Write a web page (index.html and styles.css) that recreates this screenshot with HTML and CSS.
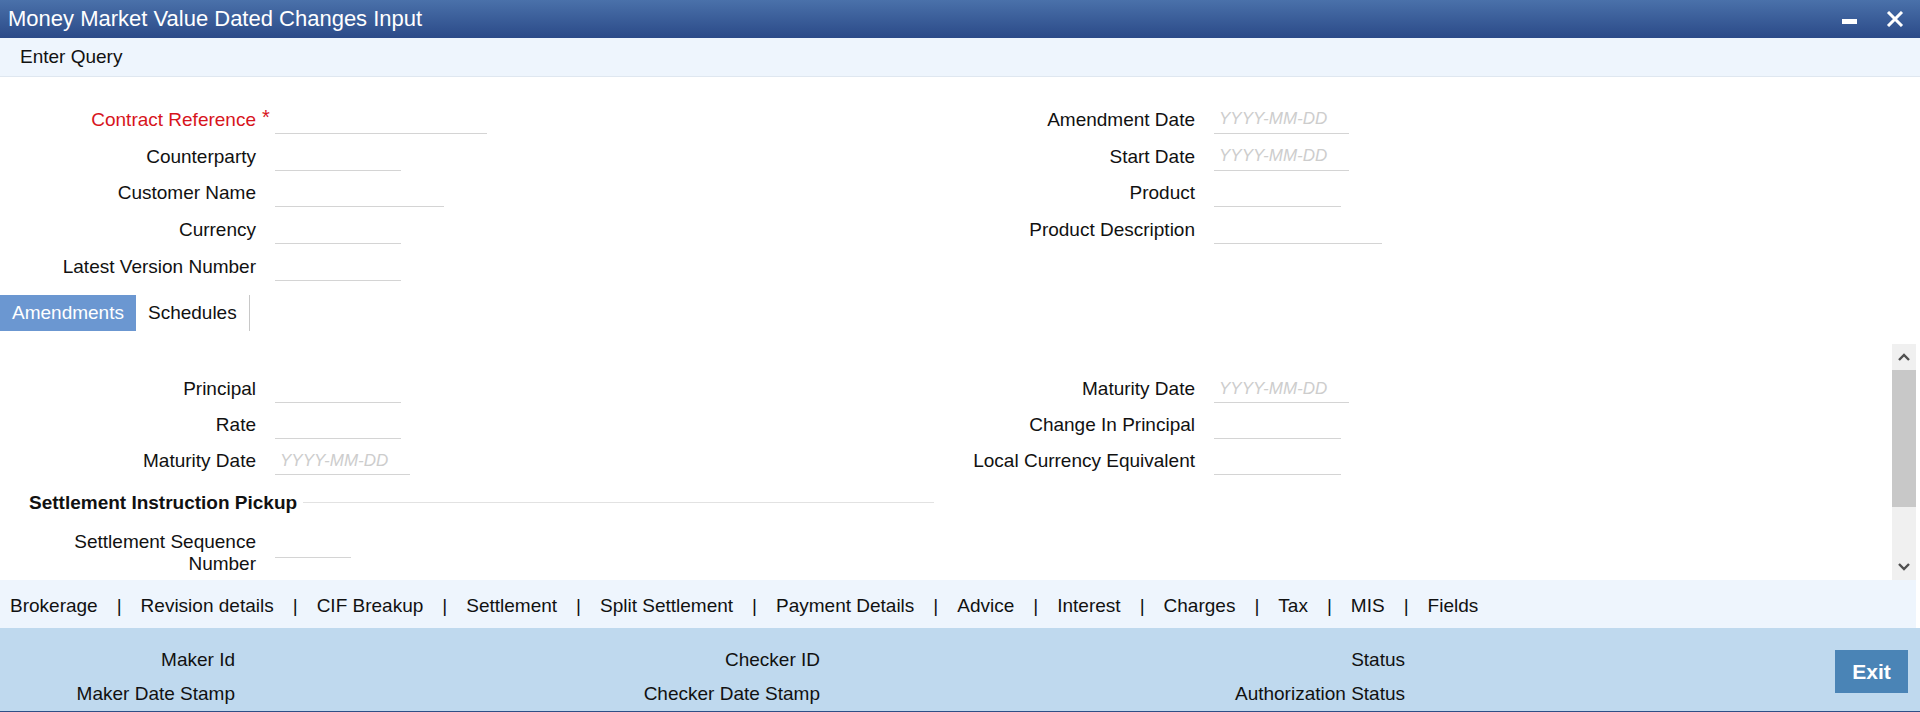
FILE: index.html
```html
<!DOCTYPE html>
<html lang="en">
<head>
    <meta charset="UTF-8">
    <title>Money Market Value Dated Changes Input</title>
    <link rel="stylesheet" href="styles.css">
</head>
<body>
    <div class="window">
        <div class="titlebar">
            <span class="title">Money Market Value Dated Changes Input</span>
            <div class="win-btns">
                <span class="btn-min"></span>
                <svg class="btn-close" width="18" height="16" viewBox="0 0 18 16">
                    <path d="M2 1 L16 15 M16 1 L2 15" stroke="#fff" stroke-width="3" fill="none"/>
                </svg>
            </div>
        </div>

        <div class="toolbar">Enter Query</div>

        <div class="header-form">
            <div class="col">
                <div class="row">
                    <label class="lbl req">Contract Reference<span class="star">*</span></label>
                    <input class="fld w212" type="text">
                </div>
                <div class="row">
                    <label class="lbl">Counterparty</label>
                    <input class="fld w126" type="text">
                </div>
                <div class="row">
                    <label class="lbl">Customer Name</label>
                    <input class="fld w169" type="text">
                </div>
                <div class="row">
                    <label class="lbl">Currency</label>
                    <input class="fld w126" type="text">
                </div>
                <div class="row">
                    <label class="lbl">Latest Version Number</label>
                    <input class="fld w126" type="text">
                </div>
            </div>
            <div class="col">
                <div class="row">
                    <label class="lbl">Amendment Date</label>
                    <input class="fld w135" type="text" placeholder="YYYY-MM-DD">
                </div>
                <div class="row">
                    <label class="lbl">Start Date</label>
                    <input class="fld w135" type="text" placeholder="YYYY-MM-DD">
                </div>
                <div class="row">
                    <label class="lbl">Product</label>
                    <input class="fld w127" type="text">
                </div>
                <div class="row">
                    <label class="lbl">Product Description</label>
                    <input class="fld w168" type="text">
                </div>
            </div>
        </div>

        <div class="tabs">
            <div class="tab active">Amendments</div>
            <div class="tab">Schedules</div>
        </div>

        <div class="scroll-area">
            <div class="scroll-content">
                <div class="grid2">
                    <div class="col">
                        <div class="row r36">
                            <label class="lbl">Principal</label>
                            <input class="fld w126" type="text">
                        </div>
                        <div class="row r36">
                            <label class="lbl">Rate</label>
                            <input class="fld w126" type="text">
                        </div>
                        <div class="row r36">
                            <label class="lbl">Maturity Date</label>
                            <input class="fld w135" type="text" placeholder="YYYY-MM-DD">
                        </div>
                    </div>
                    <div class="col">
                        <div class="row r36">
                            <label class="lbl">Maturity Date</label>
                            <input class="fld w135" type="text" placeholder="YYYY-MM-DD">
                        </div>
                        <div class="row r36">
                            <label class="lbl">Change In Principal</label>
                            <input class="fld w127" type="text">
                        </div>
                        <div class="row r36">
                            <label class="lbl">Local Currency Equivalent</label>
                            <input class="fld w127" type="text">
                        </div>
                    </div>
                </div>

                <div class="section-head">
                    <span>Settlement Instruction Pickup</span>
                    <div class="section-line"></div>
                </div>

                <div class="row seq-row">
                    <label class="lbl two-line">Settlement Sequence<br>Number</label>
                    <input class="fld w76 seq-fld" type="text">
                </div>
            </div>

            <div class="scrollbar">
                <div class="sb-arrow">
                    <svg width="12" height="8" viewBox="0 0 12 8"><polyline points="1,7 6,2 11,7" stroke="#505050" stroke-width="2.4" fill="none"/></svg>
                </div>
                <div class="sb-track">
                    <div class="sb-thumb"></div>
                </div>
                <div class="sb-arrow">
                    <svg width="12" height="8" viewBox="0 0 12 8"><polyline points="1,1 6,6 11,1" stroke="#505050" stroke-width="2.4" fill="none"/></svg>
                </div>
            </div>
        </div>

        <div class="subtabs">
            <span>Brokerage</span><span class="sep">|</span>
            <span>Revision details</span><span class="sep">|</span>
            <span>CIF Breakup</span><span class="sep">|</span>
            <span>Settlement</span><span class="sep">|</span>
            <span>Split Settlement</span><span class="sep">|</span>
            <span>Payment Details</span><span class="sep">|</span>
            <span>Advice</span><span class="sep">|</span>
            <span>Interest</span><span class="sep">|</span>
            <span>Charges</span><span class="sep">|</span>
            <span>Tax</span><span class="sep">|</span>
            <span>MIS</span><span class="sep">|</span>
            <span>Fields</span>
        </div>

        <div class="footer">
            <div class="fcol">
                <div class="frow"><span class="flbl">Maker Id</span></div>
                <div class="frow"><span class="flbl">Maker Date Stamp</span></div>
            </div>
            <div class="fcol">
                <div class="frow"><span class="flbl">Checker ID</span></div>
                <div class="frow"><span class="flbl">Checker Date Stamp</span></div>
            </div>
            <div class="fcol">
                <div class="frow"><span class="flbl">Status</span></div>
                <div class="frow"><span class="flbl">Authorization Status</span></div>
            </div>
            <button class="exit">Exit</button>
        </div>
    </div>
</body>
</html>
```

FILE: styles.css
```css
body {
    margin: 0;
    padding: 0;
    font-family: "Liberation Sans", Arial, sans-serif;
    font-size: 19px;
    color: #111;
    background: #fff;
    overflow: hidden;
}

.window {
    display: flex;
    flex-direction: column;
    width: 1920px;
    height: 712px;
}

/* title bar */
.titlebar {
    height: 38px;
    flex: none;
    display: flex;
    align-items: center;
    padding: 0 16px 0 8px;
    background: linear-gradient(#4a71aa, #2b4a88);
    color: #fff;
}
.title {
    font-size: 22px;
}
.win-btns {
    margin-left: auto;
    display: flex;
    align-items: center;
    gap: 29px;
}
.btn-min {
    display: block;
    width: 15px;
    height: 5px;
    background: #fff;
    margin-top: 4px;
}
.btn-close {
    display: block;
}

.toolbar {
    height: 38px;
    flex: none;
    line-height: 38px;
    padding-left: 20px;
    background-color: #eef5fd;
    border-bottom: 1px solid #dfe7f0;
}

/* form rows */
.header-form, .grid2 {
    display: grid;
    grid-template-columns: 939px 1fr;
}
.header-form {
    padding-top: 24.5px;
    flex: none;
}
.row {
    display: flex;
    align-items: center;
    height: 36.75px;
}
.r36 {
    height: 36px;
}
.lbl {
    width: 256px;
    flex: none;
    text-align: right;
    margin-right: 19px;
    position: relative;
}
.req {
    color: #d7141c;
}
.star {
    position: absolute;
    left: 262px;
    top: -3px;
    font-size: 20px;
}
.fld {
    box-sizing: border-box;
    height: 28px;
    border: none;
    border-bottom: 1px solid #d4d4d4;
    padding: 0 5px;
    font-family: "Liberation Sans", Arial, sans-serif;
    font-size: 17px;
    background: transparent;
    outline: none;
}
.fld::placeholder {
    color: #cdcdcd;
    font-style: italic;
}
.w76 { width: 76px; }
.w126 { width: 126px; }
.w127 { width: 127px; }
.w135 { width: 135px; }
.w168 { width: 168px; }
.w169 { width: 169px; }
.w212 { width: 212px; }

/* tabs */
.tabs {
    display: flex;
    height: 36px;
    margin-top: 10px;
    flex: none;
}
.tab {
    padding: 0 12px;
    line-height: 36px;
}
.tab.active {
    background-color: #6b97d1;
    color: #fff;
}
.tab + .tab {
    border-right: 1px solid #c8c8c8;
}

/* scrolling block */
.scroll-area {
    display: flex;
    height: 236px;
    margin-top: 13px;
    flex: none;
}
.scroll-content {
    flex: 1;
    overflow: hidden;
    padding-top: 27px;
}
.section-head {
    display: flex;
    align-items: center;
    width: 934px;
    height: 47px;
    font-weight: bold;
}
.section-head span {
    padding-left: 29px;
}
.section-line {
    flex: 1;
    margin-left: 6px;
    border-top: 1px solid #e2e2e2;
}
.seq-row {
    height: 54px;
}
.two-line {
    line-height: 22.5px;
}
.seq-fld {
    margin-bottom: 18px;
}

.scrollbar {
    width: 24px;
    margin-right: 4px;
    display: flex;
    flex-direction: column;
    background-color: #f0f0f0;
}
.sb-arrow {
    height: 26px;
    display: flex;
    align-items: center;
    justify-content: center;
}
.sb-track {
    flex: 1;
}
.sb-thumb {
    height: 137px;
    background-color: #c8c8c8;
}

/* sub-screen links */
.subtabs {
    height: 48px;
    box-sizing: border-box;
    padding-top: 4px;
    flex: none;
    display: flex;
    align-items: center;
    padding-left: 10px;
    margin-right: 4px;
    background-color: #eef5fd;
}
.sep {
    margin: 0 19px;
}

/* audit footer */
.footer {
    flex: 1;
    display: flex;
    padding-top: 15px;
    box-sizing: border-box;
    background-color: #bfd9ee;
    border-bottom: 1px solid #2f4f86;
}
.fcol {
    width: 585px;
}
.frow {
    height: 34px;
    display: flex;
    align-items: center;
}
.flbl {
    width: 235px;
    text-align: right;
}
.exit {
    margin: 7px 12px 0 auto;
    width: 73px;
    height: 43px;
    border: none;
    background-color: #4a84b6;
    color: #fff;
    font-family: "Liberation Sans", Arial, sans-serif;
    font-size: 21px;
    font-weight: bold;
}
```
